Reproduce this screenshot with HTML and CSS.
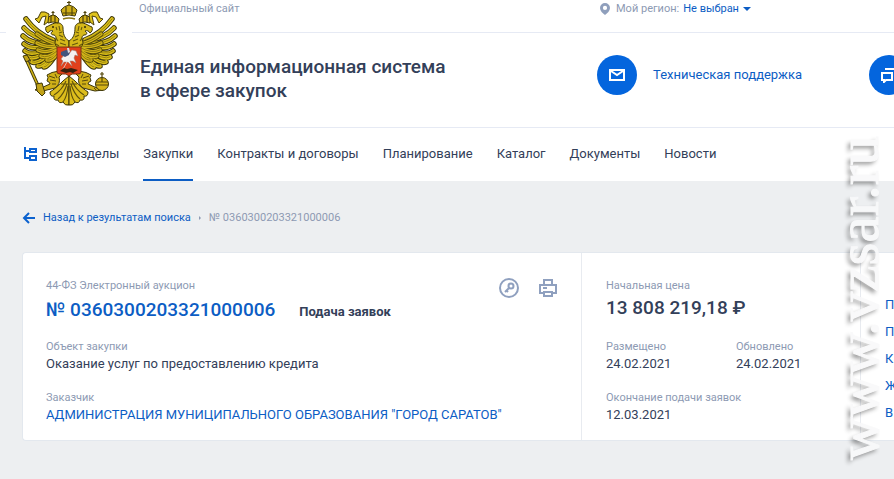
FILE: index.html
```html
<!DOCTYPE html>
<html lang="ru">
<head>
    <meta charset="UTF-8">
    <meta name="viewport" content="width=device-width, initial-scale=1.0">
    <title>Единая информационная система в сфере закупок</title>
    <link rel="stylesheet" href="styles.css">
</head>
<body>
    <header class="header">
        <div class="topbar">
            <span class="muted">Официальный сайт</span>
            <div class="region">
                <svg class="pin" width="10" height="12" viewBox="0 0 10 12">
                    <path fill="#8f9fbc" fill-rule="evenodd" d="M5 0a5 5 0 0 1 5 5c0 3-2.600 5-5 7C2.600 10 0 8 0 5a5 5 0 0 1 5-5zm0 2.800a2.100 2.100 0 1 0 0 4.200 2.100 2.100 0 0 0 0-4.200z"/>
                </svg>
                <span class="muted">Мой регион:</span>
                <button class="region-btn">Не выбран <span class="caret"></span></button>
            </div>
        </div>

        <a class="logo" href="#" aria-label="На главную">
            <svg width="98" height="107" viewBox="0 0 98 107">
                <defs>
                    <g id="feathers" fill="none" stroke-linecap="round">
                        <path d="M36 54Q28 67 24 67"/>
                        <path d="M34 53Q23 67 18 66"/>
                        <path d="M33 51Q18 65 12 62"/>
                        <path d="M32 49Q14 61 8 57"/>
                        <path d="M31 47Q12 57 5 51"/>
                        <path d="M31 45Q12 51 4 44"/>
                        <path d="M31 43Q12 45 3 36"/>
                        <path d="M31 41Q13 38 4 28"/>
                        <path d="M33 40Q16 33 6 19"/>
                    </g>
                    <g id="coverts" fill="none" stroke-linecap="round">
                        <path d="M37 54Q32 61 27 60"/>
                        <path d="M37 51Q28 59 21 56"/>
                        <path d="M37 48Q26 54 18 50"/>
                        <path d="M37 46Q26 48 17 43"/>
                        <path d="M38 44Q27 42 17 34"/>
                    </g>
                    <g id="half">
                        <use href="#feathers" stroke="#3d3608" stroke-width="5.500"/>
                        <use href="#feathers" stroke="#dcc01a" stroke-width="3.600"/>
                        <use href="#feathers" stroke="#87750f" stroke-width="0.800"/>
                        <use href="#coverts" stroke="#4c430a" stroke-width="5"/>
                        <use href="#coverts" stroke="#d3b518" stroke-width="3.400"/>
                        <use href="#coverts" stroke="#7d6c0f" stroke-width="0.800"/>
                        <!-- neck and head -->
                        <path d="M49 50V41C44 38 43 33 43 28 43 24 39 22 35 23 31 24 29 26 26 27 25 29 26 32 28 33 29 31 31 30 33 31 30 33 31 35 34 35 37 36 36 40 35 42 35 47 39 50 49 50z" fill="#d5b81a" stroke="#3d3608"/>
                        <path d="M36 27l1 3M39 26l1 5M42 32l-3 1M43 37l-4-2M45 41l-5-2M46 45l-6-2M36 38l2 3M36 44l3 2" stroke="#66580c" stroke-width="1.100" fill="none"/>
                        <circle cx="33" cy="27" r="1" fill="#302908"/>
                        <!-- small crown -->
                        <path d="M28 23l-1-4q3-4 6-4t6 4l-1 4q-5-2-10 0z" fill="#cfae18" stroke="#3d3608"/>
                        <path d="M33 15v-4M31.500 12.500h3M31 16v6M35 16v6" stroke="#4f430a" stroke-width="1.200" fill="none"/>
                        <!-- ribbon -->
                        <path d="M29 14q-4-3-8-2l-3 6-3 1 4 4 3-6 4-1-2 9 4-3z" fill="#dfc31e" stroke="#4c400a"/>
                        <!-- leg -->
                        <path d="M39 71q-8 1-12 4 2 2 0 6 3 1 3 3l-9 4q-4-1-6 2l8 1 12-3q6-4 4-11l3-3z" fill="#cfb018" stroke="#3d3608"/>
                        <path d="M29 76l6 2M30 80l6 1M32 84l4 0M24 88l-3 3M35 74l2 4" stroke="#57490b"/>
                        <!-- tail -->
                        <path d="M49 76l-6 5q-8 8-13 11 0 5 4 4-1 5 4 4 1 4 5 2 2 4 6 3z" fill="#dcbd1c" stroke="#3d3608"/>
                        <path d="M46 81q-4 9-12 14M47 84q-3 10-9 15M48 86q-1 11-5 16M41 84l7 0" stroke="#5e500c" stroke-width="1.100" fill="none"/>
                    </g>
                </defs>
                <use href="#half"/>
                <use href="#half" transform="translate(98 0) scale(-1 1)"/>
                <!-- main crown -->
                <path d="M43 16l-2-6q3-4 8-5 5 1 8 5l-2 6q-6-2-12 0z" fill="#cfae18" stroke="#3d3608"/>
                <path d="M49 5V1M47 2.500h4M46 7v8M52 7v8M43 13h12" stroke="#4f430a" stroke-width="1.200" fill="none"/>
                <path d="M43 19q6-2 12 0" stroke="#8a7512" stroke-width="1.500" fill="none"/>
                <!-- sceptre -->
                <path d="M6 59l14 31" stroke="#3d3608" stroke-width="3.200"/>
                <path d="M6 59l14 31" stroke="#d3b518" stroke-width="1.500"/>
                <path d="M3 56l4-1 3 5-4 2zM16 84l6-1 3 10-3 3-5-5z" fill="#c2a318" stroke="#3d3608"/>
                <!-- orb -->
                <circle cx="82" cy="84" r="6.500" fill="#d6b41a" stroke="#3d3608"/>
                <path d="M76 82h12M76 85h12M82 77v-5M80 74h4M82 77v5" stroke="#54470b" stroke-width="1.200"/>
                <!-- shield -->
                <path d="M37 47h24v25q0 2-3 2h-6l-3 2-3-2h-6q-3 0-3-2z" fill="#e0401c" stroke="#7a3410"/>
                <path d="M41 66l2-5-2-2 3-4 5-1 3-4 4 1 2 5-3-1-1 3 2 5-3-2-3 0 2 5-4-4-4 0z" fill="#f6f2f2" stroke="#96857d" stroke-width="0.500"/>
                <path d="M41 52l5-2 4 1-1 4-4 2-4-2z" fill="#42557e"/>
                <path d="M47 48l2 0 1 4-2 1z" fill="#d9dde5"/>
                <path d="M52 53l-9 16" stroke="#eee" stroke-width="0.700"/>
                <path d="M40 71l4-3 3 1 4-1 7 2-5 3-3-1-4 1z" fill="#38200f"/>
            </svg>
        </a>

        <div class="brand">
            <a class="brand-title" href="#">Единая информационная система<br>в сфере закупок</a>
            <div class="services">
                <a class="service" href="#">
                    <span class="service-icon">
                        <svg width="16" height="12" viewBox="0 0 16 12" fill="none" stroke="#fff" stroke-width="2">
                            <path d="M1 1h14v10H1z"/>
                            <path d="M2 2l6 4 6-4"/>
                        </svg>
                    </span>
                    Техническая поддержка
                </a>
                <a class="service" href="#" aria-label="Обратная связь">
                    <span class="service-icon">
                        <svg width="16" height="16" viewBox="0 0 16 16" fill="none" stroke="#fff" stroke-width="2">
                            <path d="M1 6h10v7H5l-2 2v-2H1z"/>
                            <path d="M4 2h11v8"/>
                        </svg>
                    </span>
                </a>
            </div>
        </div>
    </header>

    <nav class="nav">
        <a class="nav-all" href="#">
            <svg width="13" height="14" viewBox="0 0 13 14" fill="none" stroke="#0c62cf" stroke-width="2">
                <path d="M1 0v11h4M1 4h4"/>
                <path d="M6 2h6v3H6zM6 9h6v4H6z"/>
            </svg>
            Все разделы
        </a>
        <a class="active" href="#">Закупки</a>
        <a href="#">Контракты и договоры</a>
        <a href="#">Планирование</a>
        <a href="#">Каталог</a>
        <a href="#">Документы</a>
        <a href="#">Новости</a>
    </nav>

    <main class="content">
        <div class="breadcrumbs">
            <a href="#">
                <svg width="13" height="12" viewBox="0 0 13 12" fill="none" stroke="#0c62cf" stroke-width="2">
                    <path d="M13 6H2M7 1L2 6l5 5"/>
                </svg>
                Назад к результатам поиска
            </a>
            <span class="separator"></span>
            <span class="muted">№ 0360300203321000006</span>
        </div>

        <div class="card">
            <section class="card-main">
                <div class="card-actions">
                    <button aria-label="Электронная подпись">
                        <svg width="20" height="20" viewBox="0 0 20 20" fill="none" stroke="#8fa0bf" stroke-width="2">
                            <circle cx="10" cy="10" r="9"/>
                            <circle cx="12" cy="8" r="2.500"/>
                            <path d="M10 10l-4 4M7 12l2 2"/>
                        </svg>
                    </button>
                    <button aria-label="Печать">
                        <svg width="18" height="18" viewBox="0 0 18 18" fill="none" stroke="#8fa0bf" stroke-width="2">
                            <path d="M5 6V1h8v5M5 14H1V6h16v8h-4M5 13h8v4H5zM4 9h4"/>
                        </svg>
                    </button>
                </div>
                <div class="label">44-ФЗ Электронный аукцион</div>
                <div class="headline">
                    <a class="number" href="#">№ 0360300203321000006</a>
                    <span class="status">Подача заявок</span>
                </div>
                <div class="field">
                    <div class="label">Объект закупки</div>
                    <div class="value">Оказание услуг по предоставлению кредита</div>
                </div>
                <div class="field">
                    <div class="label">Заказчик</div>
                    <div class="value"><a href="#">АДМИНИСТРАЦИЯ МУНИЦИПАЛЬНОГО ОБРАЗОВАНИЯ "ГОРОД САРАТОВ"</a></div>
                </div>
            </section>

            <section class="card-price">
                <div class="label">Начальная цена</div>
                <div class="price">13 808 219,18 ₽</div>
                <div class="dates">
                    <div class="field">
                        <div class="label">Размещено</div>
                        <div class="value">24.02.2021</div>
                    </div>
                    <div class="field">
                        <div class="label">Обновлено</div>
                        <div class="value">24.02.2021</div>
                    </div>
                </div>
                <div class="field">
                    <div class="label">Окончание подачи заявок</div>
                    <div class="value">12.03.2021</div>
                </div>
            </section>

            <section class="card-links">
                <a href="#">П</a>
                <a href="#">П</a>
                <a href="#">К</a>
                <a href="#">Ж</a>
                <a href="#">В</a>
            </section>
        </div>
    </main>

    <div class="watermark">www.vzsar.ru</div>
</body>
</html>
```

FILE: styles.css
```css
* {
    margin: 0;
    padding: 0;
    box-sizing: border-box;
}

body {
    position: relative;
    min-height: 100vh;
    font-family: Roboto, "Liberation Sans", sans-serif;
    font-size: 13px;
    line-height: 18px;
    color: #334059;
    background: #edeff1;
    overflow-x: hidden;
}

a {
    color: #0c5dc4;
    text-decoration: none;
}

button {
    font: inherit;
    color: inherit;
    background: none;
    border: none;
    cursor: pointer;
}

svg {
    display: block;
    flex-shrink: 0;
}

.muted,
.label {
    font-size: 11px;
    line-height: 16px;
    color: #8d9ab3;
}

/* Header */
.header {
    display: grid;
    grid-template-columns: 6px 126px 1fr;
    grid-template-rows: 33px 94px;
    background: #fff;
}

.topbar {
    grid-column: 1 / -1;
    grid-row: 1;
    display: flex;
    justify-content: space-between;
    align-items: flex-start;
    padding: 1px 0 0 139px;
    border-bottom: 1px solid #e6eaf4;
}

.region {
    display: flex;
    align-items: center;
    width: 294px;
}

.pin {
    margin-right: 6px;
}

.region-btn {
    display: flex;
    align-items: center;
    gap: 4px;
    margin-left: 4px;
    font-size: 11px;
    line-height: 16px;
    color: #0c5dc4;
}

.caret {
    border: 4px solid transparent;
    border-top-color: #0c5dc4;
    border-bottom: none;
}

.logo {
    grid-column: 2;
    grid-row: 1 / 3;
    padding-left: 14px;
    background: #fff;
}

.brand {
    grid-column: 3;
    grid-row: 2;
    display: flex;
    justify-content: space-between;
    align-items: flex-start;
    padding: 22px 0 0 8px;
}

.brand-title {
    font-size: 19px;
    font-weight: 500;
    line-height: 24px;
    color: #334059;
}

.services {
    display: flex;
    justify-content: space-between;
    width: 297px;
    overflow: hidden;
}

.service {
    display: flex;
    align-items: center;
    gap: 16px;
}

.service:last-child {
    width: 25px;
}

.service-icon {
    display: flex;
    flex-shrink: 0;
    align-items: center;
    justify-content: center;
    width: 40px;
    height: 40px;
    border-radius: 50%;
    background: #0465dd;
}

/* Navigation */
.nav {
    display: flex;
    gap: 24px;
    padding-left: 24px;
    background: #fff;
    border-top: 1px solid #e6eaf4;
}

.nav a {
    padding: 17px 0 16px;
    color: #334059;
    white-space: nowrap;
    border-bottom: 2px solid transparent;
}

.nav .active {
    border-bottom-color: #0c5dc4;
}

.nav-all {
    display: flex;
    align-items: center;
    gap: 4px;
}

/* Content */
.content {
    padding: 29px 0 38px 22px;
}

.breadcrumbs {
    display: flex;
    align-items: center;
    font-size: 11px;
    line-height: 16px;
    margin-bottom: 26px;
}

.breadcrumbs a {
    display: flex;
    align-items: center;
    gap: 8px;
}

.separator {
    margin: 0 8px;
    border: 2px solid transparent;
    border-left-color: #8d9ab3;
    border-right: none;
}

.card {
    display: grid;
    grid-template-columns: 1fr 279px 33px;
    background: #fff;
    border: 1px solid #e3e8ee;
    border-right: none;
    border-radius: 4px 0 0 4px;
}

.card-main,
.card-price {
    padding: 25px 24px 16px;
    border-right: 1px solid #e8ebf0;
}

.card-main {
    padding-left: 23px;
}

.card-actions {
    display: flex;
    float: right;
    align-items: center;
    gap: 20px;
}

.headline {
    display: flex;
    align-items: baseline;
    gap: 24px;
    padding-top: 4px;
}

.number,
.price {
    font-size: 19px;
    font-weight: 500;
    line-height: 24px;
}

.price {
    padding: 2px 0;
}

.status {
    font-weight: 700;
}

.field {
    margin-top: 17px;
}

.dates {
    display: flex;
}

.dates .field {
    flex: none;
    width: 130px;
}

.card-links {
    display: flex;
    flex-direction: column;
    gap: 9px;
    padding: 43px 0 16px 24px;
    overflow: hidden;
}

/* Watermark over the page */
.watermark {
    position: absolute;
    top: 136px;
    right: 7px;
    font-family: "Liberation Serif", serif;
    font-size: 59px;
    line-height: 58px;
    writing-mode: vertical-rl;
    transform: rotate(180deg);
    color: #f9f9fa;
    -webkit-text-stroke: 1px #f9f9fa;
    text-shadow: -3px -3px 4px rgba(0, 0, 0, 0.45);
    opacity: 0.9;
    pointer-events: none;
}
```
